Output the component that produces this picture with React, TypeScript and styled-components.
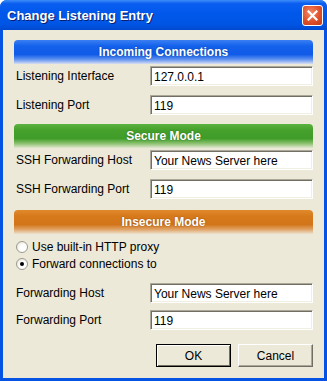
import React, { useState } from 'react';
import styled, { createGlobalStyle } from 'styled-components';

const GlobalStyle = createGlobalStyle`
  html, body {
    margin: 0;
    padding: 0;
    background: #ffffff;
  }
  body {
    font-family: 'Liberation Sans', Arial, sans-serif;
    font-size: 12px;
  }
`;

const Window = styled.div`
  width: 327px;
  height: 381px;
  box-sizing: border-box;
  display: flex;
  flex-direction: column;
  background: #0553e2;
  border-radius: 7px 7px 0 0;
  overflow: hidden;
`;

const TitleBar = styled.div`
  height: 30px;
  flex-shrink: 0;
  display: flex;
  align-items: center;
  justify-content: space-between;
  padding: 0 4px 0 7px;
  background: linear-gradient(
    to bottom,
    #3d8cf7 0%,
    #0a5ef0 12%,
    #0058ea 45%,
    #0055e5 80%,
    #0049d0 100%
  );
`;

const Title = styled.span`
  color: #ffffff;
  font-family: 'Liberation Sans', Arial, sans-serif;
  font-weight: bold;
  font-size: 13px;
  text-shadow: 1px 1px 0 #0a1e6e;
`;

const CloseButton = styled.button`
  width: 21px;
  height: 21px;
  padding: 0;
  border: 1px solid #ffffff;
  border-radius: 3px;
  background: radial-gradient(circle at 40% 35%, #f28a6a 0%, #e0502a 55%, #c23a12 100%);
  display: flex;
  align-items: center;
  justify-content: center;
  cursor: pointer;
`;

const Body = styled.div`
  flex: 1;
  margin: 0 3px 3px 3px;
  background: #ece9d8;
  padding: 10px 11px 0 11px;
  display: flex;
  flex-direction: column;
`;

const SectionHeader = styled.div<{ tone: 'blue' | 'green' | 'orange' }>`
  height: 24px;
  box-sizing: border-box;
  padding-top: 5px;
  text-align: center;
  color: #ffffff;
  font-weight: bold;
  font-size: 12px;
  line-height: 15px;
  text-shadow: 0 0 2px rgba(0, 0, 0, 0.35);
  border-radius: 4px 4px 0 0;
  margin-bottom: 2px;
  background: ${(p) =>
    p.tone === 'blue'
      ? 'linear-gradient(to bottom, #3a7ff2 0%, #1462ec 25%, #0f5ae8 60%, #5a8ff0 80%, #d8def0 100%)'
      : p.tone === 'green'
      ? 'linear-gradient(to bottom, #5cb240 0%, #46a12c 25%, #3f9c28 60%, #86bf6a 80%, #e2e6d0 100%)'
      : 'linear-gradient(to bottom, #e08a2c 0%, #d77a1c 25%, #d27418 60%, #e0a060 80%, #ece2d0 100%)'};
`;

const Section = styled.div<{ gap?: number }>`
  display: flex;
  flex-direction: column;
  margin-bottom: ${(p) => p.gap ?? 9}px;
`;

const FieldRow = styled.div<{ top?: number }>`
  display: flex;
  align-items: center;
  height: 20px;
  margin-top: ${(p) => p.top ?? 0}px;
`;

const Label = styled.label`
  width: 134px;
  padding-left: 2px;
  color: #000000;
`;

const TextBox = styled.input`
  width: 163px;
  height: 20px;
  box-sizing: border-box;
  margin: 0;
  padding: 1px 3px 0 3px;
  font-family: 'Liberation Sans', Arial, sans-serif;
  font-size: 12px;
  color: #000000;
  background: #ffffff;
  border: 1px solid;
  border-color: #aca899 #ffffff #ffffff #aca899;
  box-shadow: inset 1px 1px 0 #716f64, inset -1px -1px 0 #f1efe2;
  outline: none;
`;

const RadioRow = styled.label<{ top?: number }>`
  display: flex;
  align-items: center;
  height: 17px;
  padding-left: 2px;
  gap: 4px;
  margin-top: ${(p) => p.top ?? 0}px;
  color: #000000;
`;

const RadioDot = styled.span<{ checked: boolean }>`
  width: 12px;
  height: 12px;
  box-sizing: border-box;
  border-radius: 50%;
  border: 1px solid #9c9a90;
  background: radial-gradient(circle at 65% 65%, #ffffff 40%, #dcd9cc 100%);
  display: flex;
  align-items: center;
  justify-content: center;

  &::after {
    content: '';
    width: 4px;
    height: 4px;
    border-radius: 50%;
    background: ${(p) => (p.checked ? '#000000' : 'transparent')};
  }
`;

const ButtonBar = styled.div`
  display: flex;
  justify-content: flex-end;
  gap: 7px;
  margin-top: 14px;
`;

const DialogButton = styled.button<{ primary?: boolean }>`
  width: 75px;
  height: 23px;
  margin: 0;
  padding: 0;
  font-family: 'Liberation Sans', Arial, sans-serif;
  font-size: 12px;
  color: #000000;
  background: #ece9d8;
  border: 1px solid;
  border-color: ${(p) => (p.primary ? '#000000' : '#ffffff #716f64 #716f64 #ffffff')};
  box-shadow: ${(p) =>
    p.primary
      ? 'inset 1px 1px 0 #ffffff, inset -1px -1px 0 #716f64'
      : 'inset -1px -1px 0 #aca899'};
`;

export default function App() {
  const [mode, setMode] = useState<'proxy' | 'forward'>('forward');

  return (
    <>
      <GlobalStyle />
      <Window>
        <TitleBar>
          <Title>Change Listening Entry</Title>
          <CloseButton aria-label="Close">
            <svg width="11" height="11" viewBox="0 0 11 11">
              <path d="M1.5 1.5 L9.5 9.5 M9.5 1.5 L1.5 9.5" stroke="#ffffff" strokeWidth="2.2" strokeLinecap="square" />
            </svg>
          </CloseButton>
        </TitleBar>
        <Body>
          <Section>
            <SectionHeader tone="blue">Incoming Connections</SectionHeader>
            <FieldRow>
              <Label>Listening Interface</Label>
              <TextBox defaultValue="127.0.0.1" />
            </FieldRow>
            <FieldRow top={9}>
              <Label>Listening Port</Label>
              <TextBox defaultValue="119" />
            </FieldRow>
          </Section>

          <Section gap={11}>
            <SectionHeader tone="green">Secure Mode</SectionHeader>
            <FieldRow>
              <Label>SSH Forwarding Host</Label>
              <TextBox defaultValue="Your News Server here" />
            </FieldRow>
            <FieldRow top={9}>
              <Label>SSH Forwarding Port</Label>
              <TextBox defaultValue="119" />
            </FieldRow>
          </Section>

          <Section gap={0}>
            <SectionHeader tone="orange">Insecure Mode</SectionHeader>
            <RadioRow top={2} onClick={() => setMode('proxy')}>
              <RadioDot checked={mode === 'proxy'} />
              Use built-in HTTP proxy
            </RadioRow>
            <RadioRow onClick={() => setMode('forward')}>
              <RadioDot checked={mode === 'forward'} />
              Forward connections to
            </RadioRow>
            <FieldRow top={11}>
              <Label>Forwarding Host</Label>
              <TextBox defaultValue="Your News Server here" />
            </FieldRow>
            <FieldRow top={7}>
              <Label>Forwarding Port</Label>
              <TextBox defaultValue="119" />
            </FieldRow>
          </Section>

          <ButtonBar>
            <DialogButton primary>OK</DialogButton>
            <DialogButton>Cancel</DialogButton>
          </ButtonBar>
        </Body>
      </Window>
    </>
  );
}
